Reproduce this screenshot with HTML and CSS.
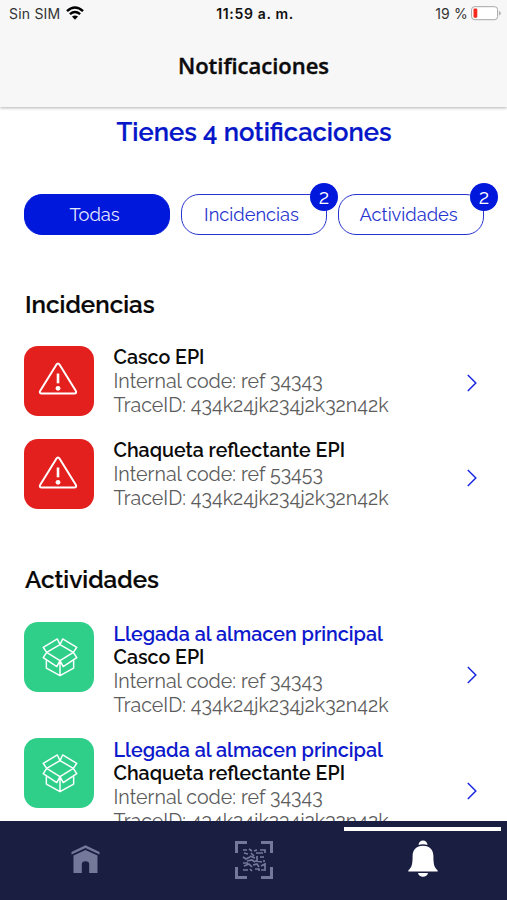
FILE: index.html
```html
<!DOCTYPE html>
<html lang="es">
<head>
<meta charset="utf-8">
<meta name="viewport" content="width=device-width">
<title>Notificaciones</title>
<link rel="stylesheet" href="styles.css">
</head>
<body>
<svg class="defs" aria-hidden="true">
  <symbol id="warning" viewBox="0 0 40 34"><path d="M18.200 2.900 2.400 28.600q-1.800 3 1.700 3h31.800q3.500 0 1.700-3L21.800 2.900q-1.800-2.800-3.600 0Z" fill="none" stroke="currentColor" stroke-width="2"/><path d="M20 11.500v9.800" stroke="currentColor" stroke-width="2.600"/><circle cx="20" cy="26.300" r="2.400" fill="currentColor"/></symbol>
  <symbol id="box" viewBox="0 0 36 40"><path d="M15.300 1 .8 9.500l3.500 5.200L18 6.800ZM20.700 1l14.500 8.500-3.500 5.200L18 6.800ZM4.300 14.700.800 20.200l13.900 9.100L18 23.200ZM31.700 14.700l3.500 5.500-13.900 9.100L18 23.200ZM18 23.200v15.500M4 22.500v8.300l14 7.900 14-7.900v-8.300" fill="none" stroke="currentColor" stroke-width="1.500" stroke-linejoin="round"/></symbol>
  <symbol id="chevron" viewBox="0 0 10 18"><path d="m.8 1 8 8-8 8" fill="none" stroke="currentColor" stroke-width="1.500"/></symbol>
</svg>
<div class="app">
  <header class="header">
    <div class="status">
      <div class="carrier"><span>Sin SIM</span>
        <svg class="wifi" viewBox="0 0 18 14"><path d="M1 5.100Q9-2 17 5.100M3.900 8.100q5.100-4.300 10.200 0" fill="none" stroke="currentColor" stroke-width="2.500"/><path d="M6 10.600q3-2.300 6 0L9 13.700Z" fill="currentColor"/></svg>
      </div>
      <div class="clock">11:59 a. m.</div>
      <div class="battery"><span>19 %</span>
        <svg class="cell" viewBox="0 0 30 15"><rect x=".6" y=".7" width="26" height="13" rx="3" fill="#fff" stroke="#a5a5a8"/><rect x="2.500" y="2.600" width="3.800" height="9.200" rx="1" fill="#f4291f"/><path d="M28.200 5v4.400q1.500-.5 1.500-2.200T28.200 5Z" fill="#a5a5a8"/></svg>
      </div>
    </div>
    <h1 class="title">Notificaciones</h1>
  </header>
  <main class="content">
    <h2 class="summary">Tienes 4 notificaciones</h2>
    <div class="filters">
      <button class="filter active">Todas</button>
      <button class="filter">Incidencias<span class="badge">2</span></button>
      <button class="filter last">Actividades<span class="badge">2</span></button>
    </div>
    <section class="group incidents">
      <h3 class="heading">Incidencias</h3>
      <article class="item">
        <div class="tile red"><svg class="warning"><use href="#warning"/></svg></div>
        <div class="details"><p class="name">Casco EPI</p><p class="code">Internal code: ref 34343</p><p class="trace">TraceID: 434k24jk234j2k32n42k</p></div>
        <svg class="chevron"><use href="#chevron"/></svg>
      </article>
      <article class="item lower">
        <div class="tile red"><svg class="warning"><use href="#warning"/></svg></div>
        <div class="details"><p class="name">Chaqueta reflectante EPI</p><p class="code">Internal code: ref 53453</p><p class="trace">TraceID: 434k24jk234j2k32n42k</p></div>
        <svg class="chevron"><use href="#chevron"/></svg>
      </article>
    </section>
    <section class="group activities">
      <h3 class="heading">Actividades</h3>
      <article class="item">
        <div class="tile green"><svg class="box"><use href="#box"/></svg></div>
        <div class="details"><p class="event">Llegada al almacen principal</p><p class="name">Casco EPI</p><p class="code">Internal code: ref 34343</p><p class="trace">TraceID: 434k24jk234j2k32n42k</p></div>
        <svg class="chevron"><use href="#chevron"/></svg>
      </article>
      <article class="item">
        <div class="tile green"><svg class="box"><use href="#box"/></svg></div>
        <div class="details"><p class="event">Llegada al almacen principal</p><p class="name">Chaqueta reflectante EPI</p><p class="code">Internal code: ref 34343</p><p class="trace">TraceID: 434k24jk234j2k32n42k</p></div>
        <svg class="chevron"><use href="#chevron"/></svg>
      </article>
    </section>
  </main>
  <nav class="nav">
    <a class="tab"><svg class="home" viewBox="0 0 29 28"><path d="M.5 7 14.500.300l14 6.700v2.500l-14-6.600-14 6.600Z"/><path d="m2.500 10.500 12-5.600 12 5.600V28h-8.300v-8.500q0-3.300-3.700-3.300t-3.700 3.300V28H2.500Z"/></svg></a>
    <a class="tab"><svg class="scan" viewBox="0 0 38 38"><path d="M1.500 12V1.500H12M26 1.500h10.500V12M36.500 26v10.500H26M12 36.500H1.500V26" fill="none" stroke="currentColor" stroke-width="3"/><path d="M8 9h4M14 8l3 2M19 10l3-1M25 9h5v3M9 12l4 1M16 12l3 3M21 12h7M8 16l3 2 4-2M15 15l5 2M22 15v5M25 16h4M12 20l5-1 3 2M8 22h5M20 20l7 1M29 19v2M9 25l5-2 3 3M18 24l4-1 2 3M26 25l4-2v7M8 29h5M15 28l2 2M20 28h4v2M26 29h3" fill="none" stroke="currentColor" stroke-width="1.700"/></svg></a>
    <a class="tab selected"><svg class="bell" viewBox="0 0 30 37"><path d="M10.500 5q.6-4.500 4.500-4.500T19.500 5Q15 3.500 10.500 5Z"/><path d="M15 5.700c7 0 10.400 4.500 10.400 10.300 0 8 .8 11.500 4.300 14.500v1H.3v-1C3.800 27.500 4.600 24 4.600 16 4.600 10.200 8 5.700 15 5.700ZM10 33h10q-1 3.800-5 3.800T10 33Z"/></svg></a>
  </nav>
</div>
</body>
</html>
```
FILE: styles.css
```css
* { box-sizing: border-box; }
body { margin: 0; background: #fff; font-family: Raleway, Lato, sans-serif; }
h1, h2, h3, p { margin: 0; white-space: nowrap; }
svg { display: block; flex: none; }
.defs { position: absolute; width: 0; height: 0; }
.app { height: 900px; display: flex; flex-direction: column; overflow: hidden; }
.header { height: 107px; flex: none; background: #f7f7f7; box-shadow: 0 1px 3px rgba(0, 0, 0, .3); }
.status { display: grid; grid-template-columns: 1fr auto 1fr; height: 28px; align-items: center; padding: 0 6px 0 9px; font: 14px/28px Inter, sans-serif; color: #333; }
.carrier, .battery { display: flex; align-items: center; gap: 6px; letter-spacing: .2px; }
.battery { justify-content: flex-end; gap: 3px; }
.wifi { width: 18px; height: 14px; color: #000; margin-top: -2px; }
.cell { width: 30px; height: 15px; margin-top: -2px; }
.clock { font-weight: 600; letter-spacing: .65px; color: #111; }
.title { padding-top: 21px; text-align: center; font: 600 22px/32px "Open Sans", sans-serif; -webkit-text-stroke: .4px #0b0b0b; color: #0b0b0b; }
.content { flex: 1; min-height: 0; overflow: hidden; padding: 9px 23px 0 24px; }
.summary { text-align: center; font-size: 25.6px; font-weight: 600; line-height: 32px; color: #0416c8; -webkit-text-stroke: .2px #0416c8; }
.filters { display: flex; gap: 11px; margin-top: 46px; }
.filter { position: relative; width: 146px; height: 41px; padding: 0 5px 0 0; border: 1.5px solid #2734cf; border-radius: 18px; background: #fff; color: #2734cf; font: 18.3px/38px Raleway, Lato, sans-serif; }
.filter.active { background: #0017dc; border-color: #0017dc; color: #e6e8ff; }
.badge { position: absolute; right: -12px; top: -12px; width: 28px; height: 28px; border-radius: 50%; background: #0017dc; color: #fff; line-height: 28px; font-size: 20px; }
.last .badge { right: -15px; }
.heading { font-size: 24.2px; font-weight: 600; line-height: 30px; color: #080808; padding-left: 1px; -webkit-text-stroke: .2px #080808; }
.incidents { margin-top: 55px; }
.incidents .heading { margin-bottom: 25px; }
.activities { margin-top: 55px; }
.activities .heading { margin-bottom: 26px; }
.item { display: flex; align-items: flex-start; margin-bottom: 21px; }
.activities .item { margin-bottom: 20px; }
.tile { width: 70px; height: 70px; border-radius: 14px; margin-top: 1px; display: flex; flex: none; justify-content: center; color: #fff; }
.activities .tile { margin-top: .5px; }
.red { background: #e3201e; }
.green { background: #2fcf8a; }
.warning { width: 40px; height: 34px; margin: 16px 2px 0 0; }
.lower .warning { margin-top: 17px; }
.box { width: 36px; height: 39px; margin: 16.5px 0 0 1px; }
.details { width: 377px; flex: none; padding: 1px 0 0 19.5px; margin-bottom: -1px; font-size: 19.6px; line-height: 24px; color: #5c5c5c; }
.name { color: #0b0b0b; font-weight: 600; }
.event { color: #0d19cc; font-size: 19.7px; font-weight: 600; }
.chevron { width: 10px; height: 18px; margin-left: -4px; color: #1927df; align-self: center; margin-top: 3px; }
.lower .chevron { margin-top: 8px; }
.activities .chevron { margin-top: 12px; }
.nav { height: 79px; flex: none; background: #1a1f41; display: grid; grid-template-columns: repeat(3, 1fr); }
.tab { position: relative; display: flex; justify-content: center; color: #747999; fill: currentColor; }
.home { width: 29px; height: 28px; margin: 24px 0 0 1px; }
.scan { width: 38px; height: 38px; margin-top: 20px; }
.selected { color: #fff; }
.selected::before { content: ""; position: absolute; top: 6px; left: 6px; right: 6px; height: 4px; background: #fff; }
.bell { width: 30px; height: 37px; margin: 19px 0 0 1px; }
```
